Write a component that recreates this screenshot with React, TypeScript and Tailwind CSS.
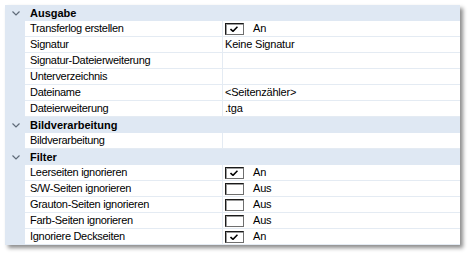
import React from "react";

type Row =
    | { kind: "group"; label: string }
    | { kind: "prop"; label: string; value?: string; check?: boolean };

const rows: Row[] = [
    { kind: "group", label: "Ausgabe" },
    { kind: "prop", label: "Transferlog erstellen", check: true, value: "An" },
    { kind: "prop", label: "Signatur", value: "Keine Signatur" },
    { kind: "prop", label: "Signatur-Dateierweiterung" },
    { kind: "prop", label: "Unterverzeichnis" },
    { kind: "prop", label: "Dateiname", value: "<Seitenzähler>" },
    { kind: "prop", label: "Dateierweiterung", value: ".tga" },
    { kind: "group", label: "Bildverarbeitung" },
    { kind: "prop", label: "Bildverarbeitung" },
    { kind: "group", label: "Filter" },
    { kind: "prop", label: "Leerseiten ignorieren", check: true, value: "An" },
    { kind: "prop", label: "S/W-Seiten ignorieren", check: false, value: "Aus" },
    { kind: "prop", label: "Grauton-Seiten ignorieren", check: false, value: "Aus" },
    { kind: "prop", label: "Farb-Seiten ignorieren", check: false, value: "Aus" },
    { kind: "prop", label: "Ignoriere Deckseiten", check: true, value: "An" },
];

function Chevron() {
    return (
        <svg width="8" height="5" viewBox="0 0 8 5" className="block">
            <path d="M0.5 0.5 L4 4 L7.5 0.5" fill="none" stroke="#5f6b78" strokeWidth="1.2" />
        </svg>
    );
}

function CheckBox({ checked }: { checked: boolean }) {
    return (
        <div className="w-[19px] h-[12px] border border-[#1a1a1a] border-b-[#6e6e6e] border-r-[#6e6e6e] bg-white shadow-[inset_1px_1px_0_#9a9a9a] flex items-center justify-center">
            {checked && (
                <svg width="8" height="6" viewBox="0 0 8 6" className="block -ml-[2px] mt-[1px]">
                    <path d="M0.5 3 L3 5.3 L7.5 0.7" fill="none" stroke="#000" strokeWidth="1.6" />
                </svg>
            )}
        </div>
    );
}

export default function App() {
    return (
        <div className="w-[469px] h-[256px] bg-white pt-[5px] pl-[5px] font-['Liberation_Sans',Arial,sans-serif] text-[11px] text-black leading-none">
            <div className="w-[455px] bg-white shadow-[3px_3px_4px_rgba(0,0,0,0.45)]">
                {rows.map((row, i) =>
                    row.kind === "group" ? (
                        <div key={i} className="h-[16px] flex items-center bg-[#dfe8f3]">
                            <div className="w-[20px] flex justify-center pl-[1px]">
                                <Chevron />
                            </div>
                            <span className="pl-[5px] font-bold">{row.label}</span>
                        </div>
                    ) : (
                        <div key={i} className="h-[16px] flex">
                            <div className="w-[20px] bg-[#dfe8f3]" />
                            <div className="w-[197px] flex items-center pl-[5px] border-b border-[#e4ebf3] tracking-[-0.3px]">
                                {row.label}
                            </div>
                            <div className="flex-1 flex items-center pl-[2px] border-l border-b border-[#e4ebf3] tracking-[-0.2px]">
                                {row.check !== undefined && (
                                    <div className="mr-[9px]">
                                        <CheckBox checked={row.check} />
                                    </div>
                                )}
                                {row.value}
                            </div>
                        </div>
                    )
                )}
            </div>
        </div>
    );
}
